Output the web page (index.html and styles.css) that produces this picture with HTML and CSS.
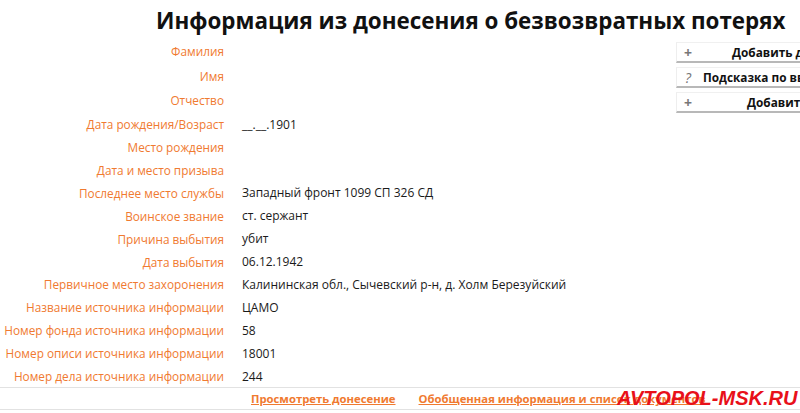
FILE: index.html
```html
<!DOCTYPE html>
<html lang="ru">
<head>
<meta charset="utf-8">
<link rel="stylesheet" href="styles.css">
</head>
<body>
<div class="page">
  <h1 class="title">Информация из донесения о безвозвратных потерях</h1>
  <div class="main">
    <div class="info">
      <div class="row r-tall"><span class="lbl">Фамилия</span><span class="val"></span></div>
      <div class="row r-tall"><span class="lbl">Имя</span><span class="val"></span></div>
      <div class="row r-tall"><span class="lbl">Отчество</span><span class="val"></span></div>
      <div class="row"><span class="lbl">Дата рождения/Возраст</span><span class="val">__.__.1901</span></div>
      <div class="row"><span class="lbl">Место рождения</span><span class="val"></span></div>
      <div class="row"><span class="lbl">Дата и место призыва</span><span class="val"></span></div>
      <div class="row"><span class="lbl">Последнее место службы</span><span class="val">Западный фронт 1099 СП 326 СД</span></div>
      <div class="row"><span class="lbl">Воинское звание</span><span class="val">ст. сержант</span></div>
      <div class="row"><span class="lbl">Причина выбытия</span><span class="val">убит</span></div>
      <div class="row"><span class="lbl">Дата выбытия</span><span class="val">06.12.1942</span></div>
      <div class="row"><span class="lbl">Первичное место захоронения</span><span class="val">Калининская обл., Сычевский р-н, д. Холм Березуйский</span></div>
      <div class="row"><span class="lbl">Название источника информации</span><span class="val">ЦАМО</span></div>
      <div class="row"><span class="lbl">Номер фонда источника информации</span><span class="val">58</span></div>
      <div class="row"><span class="lbl">Номер описи источника информации</span><span class="val">18001</span></div>
      <div class="row"><span class="lbl">Номер дела источника информации</span><span class="val">244</span></div>
    </div>
    <div class="side">
      <div class="btn"><span class="ic">+</span><span class="btxt c1">Добавить дополнительную информацию</span></div>
      <div class="btn"><span class="ic q">?</span><span class="btxt c2">Подсказка по вводу</span></div>
      <div class="btn"><span class="ic">+</span><span class="btxt c3">Добавить в избранное</span></div>
    </div>
  </div>
  <div class="footer">
    <a class="link l1" href="#">Просмотреть донесение</a>
    <a class="link l2" href="#">Обобщенная информация и список документов</a>
    <span class="wm">AVTOPOL-MSK.RU</span>
  </div>
</div>
</body>
</html>
```
FILE: styles.css
```css
html, body {
  margin: 0;
  padding: 0;
  background: #fff;
}
body {
  width: 800px;
  height: 413px;
  overflow: hidden;
}
.page {
  position: relative;
  width: 800px;
  overflow: hidden;
  font-family: "Open Sans", "DejaVu Sans", sans-serif;
}
.title {
  margin: 0;
  padding: 6px 0 0 156px;
  height: 33px;
  font-size: 22.4px;
  line-height: 30px;
  font-weight: 700;
  color: #111;
  white-space: nowrap;
}
.main {
  display: flex;
}
.info {
  width: 676px;
  flex: none;
  display: flex;
  flex-direction: column;
}
.row {
  display: grid;
  grid-template-columns: 224px 1fr;
  column-gap: 18px;
  height: 22.9px;
  align-items: center;
}
.row.r-tall {
  height: 24.6px;
}
.lbl {
  text-align: right;
  color: #f07a30;
  white-space: nowrap;
  font-size: 11.8px;
}
.val {
  color: #1a1a1a;
  white-space: nowrap;
  font-size: 12px;
}
.side {
  width: 200px;
  flex: none;
  padding-top: 3px;
  display: flex;
  flex-direction: column;
  gap: 4px;
}
.btn {
  height: 18px;
  display: flex;
  align-items: center;
  background: #fff;
  border-top: 1px solid #f0f0f0;
  border-left: 1px solid #eeeeee;
  border-bottom: 2px solid #b8b8b8;
  font-size: 11.8px;
  font-weight: 700;
  color: #111;
  white-space: nowrap;
}
.ic {
  width: 22px;
  flex: none;
  text-align: center;
  color: #777;
  font-weight: 700;
  font-size: 14px;
}
.ic.q {
  font-style: italic;
  font-weight: 400;
}
.btxt.c1 { padding-left: 33px; }
.btxt.c2 { padding-left: 4px; }
.btxt.c3 { padding-left: 48px; }
.footer {
  position: relative;
  border-top: 1px solid #e2e2e2;
  border-bottom: 1px solid #e2e2e2;
  height: 21px;
  display: flex;
  align-items: center;
  padding-left: 251px;
  gap: 23px;
  font-size: 11.3px;
  font-weight: 700;
  white-space: nowrap;
}
.link {
  color: #f07a30;
  text-decoration: underline;
}
.wm {
  position: absolute;
  left: 617px;
  top: -1px;
  font-family: "Liberation Sans", Arial, sans-serif;
  font-style: italic;
  font-weight: 700;
  font-size: 20px;
  color: #e8101a;
}
```
